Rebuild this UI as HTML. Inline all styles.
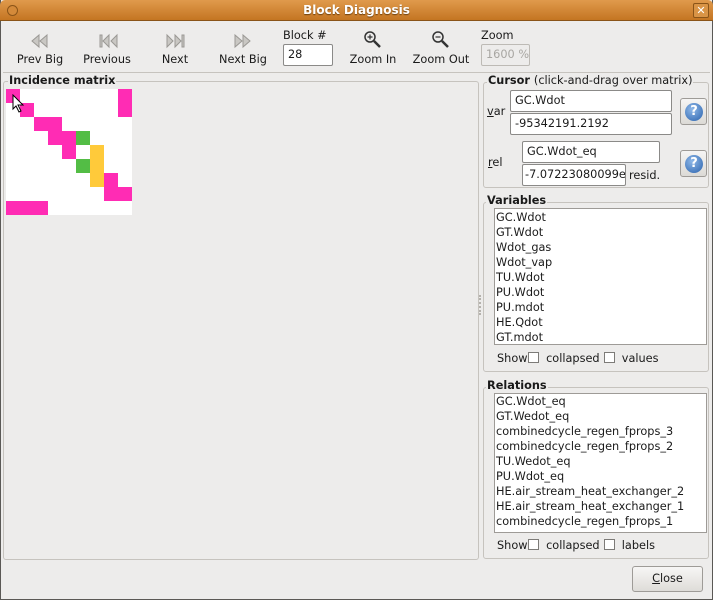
<!DOCTYPE html>
<html><head><style>
*{margin:0;padding:0;box-sizing:border-box}
body{width:713px;height:600px;background:#edeceb;font-family:"DejaVu Sans","Liberation Sans",sans-serif;font-size:11.3px;color:#1a1a1a;position:relative;overflow:hidden}
.a{position:absolute}
.title{left:0;top:0;width:713px;height:21px;background:linear-gradient(#e09a4c,#c47522);border-bottom:1px solid #8a5418;border-radius:5px 5px 0 0}
.title span{position:absolute;left:0;right:0;top:3px;text-align:center;color:#fff;font-weight:bold;font-size:12px;text-shadow:0 1px 1px #6b4010}
.lbl{text-align:center;width:70px}
.entry{background:#fff;border:1px solid #8b8a88;border-radius:2px;padding:3px 0 0 4px;height:22px;white-space:nowrap;overflow:hidden}
.frame{border:1px solid #c6c3be;border-radius:3px}
.legend{background:#edeceb;padding:0 1px;font-weight:bold}
.list{background:#fff;border:1px solid #9e9b97}
.list div{height:15px;line-height:15px;padding-left:1px}
.help{width:27px;height:27px;border:1px solid #9e9b97;border-radius:3px;background:linear-gradient(#f6f5f4,#dcdad6)}
.help i{position:absolute;left:4px;top:4px;width:18px;height:18px;border-radius:50%;background:radial-gradient(circle at 40% 35%,#8fb8e8,#2a62ad);color:#fff;font-style:normal;font-weight:bold;text-align:center;line-height:18px;font-size:13px}
.cb{display:inline-block;width:11px;height:11px;border:1px solid #7d7b78;background:#fff;vertical-align:-1px;margin:0 3px 0 1px}
.c{position:absolute;width:14px;height:14px}
.p{background:#ff2cb4}.g{background:#53bd45}.y{background:#ffca3a}
</style></head><body>
<div class="a" style="left:0;top:0;width:713px;height:600px;border:1px solid #5a5855;border-top:none"></div>
<div class="a title"><span>Block Diagnosis</span><div class="a" style="left:7px;top:5px;width:11px;height:11px;border-radius:50%;border:1px solid #8a5418;background:#d48a3a"></div><div class="a" style="right:4px;top:3px;width:16px;height:15px;border:1px solid #8a5418;border-radius:2px;background:#d99446;color:#fff;font-weight:bold;font-size:11px;text-align:center;line-height:13px">✕</div></div>

<svg class="a" style="left:0;top:30px" width="560" height="22">
<g fill="#c9c7c3" stroke="#9a9894" stroke-width="1">
<path d="M39 5 L32 11 L39 17Z M47 5 L40 11 L47 17Z"/>
<path d="M100 5h2v12h-2z M109 5 L103 11 L109 17Z M117 5 L111 11 L117 17Z"/>
<path d="M167 5 L173 11 L167 17Z M175 5 L181 11 L175 17Z M182 5h2v12h-2z"/>
<path d="M235 5 L242 11 L235 17Z M243 5 L250 11 L243 17Z"/>
</g>
<g fill="none" stroke="#333" stroke-width="1.5">
<circle cx="370" cy="7" r="5"/><path d="M374 11l6 6" stroke-width="2.5"/><path d="M367.5 7h5M370 4.5v5" stroke-width="1.2"/>
<circle cx="438" cy="7" r="5"/><path d="M442 11l6 6" stroke-width="2.5"/><path d="M435.5 7h5" stroke-width="1.2"/>
</g>
</svg>
<div class="a lbl" style="left:5px;top:53px">Prev Big</div>
<div class="a lbl" style="left:72px;top:53px">Previous</div>
<div class="a lbl" style="left:140px;top:53px">Next</div>
<div class="a lbl" style="left:208px;top:53px">Next Big</div>
<div class="a" style="left:283px;top:29px">Block #</div>
<div class="a entry" style="left:283px;top:44px;width:50px">28</div>
<div class="a lbl" style="left:338px;top:53px">Zoom In</div>
<div class="a lbl" style="left:406px;top:53px">Zoom Out</div>
<div class="a" style="left:481px;top:29px">Zoom</div>
<div class="a entry" style="left:481px;top:44px;width:49px;background:#edeceb;color:#a8a6a2;border-color:#bdbab5">1600 %</div>
<div class="a" style="left:3px;top:72px;width:707px;height:1px;background:#c6c3be"></div>

<div class="a frame" style="left:3px;top:81px;width:476px;height:479px"></div>
<div class="a legend" style="left:8px;top:74px">Incidence matrix</div>
<div class="a" style="left:6px;top:89px;width:126px;height:126px;background:#fff">
<div class="c p" style="left:0;top:0"></div><div class="c p" style="left:112px;top:0;height:28px"></div>
<div class="c p" style="left:14px;top:14px"></div>
<div class="c p" style="left:28px;top:28px;width:28px"></div>
<div class="c p" style="left:42px;top:42px;width:28px"></div><div class="c g" style="left:70px;top:42px"></div>
<div class="c p" style="left:56px;top:56px"></div><div class="c y" style="left:84px;top:56px;height:42px"></div>
<div class="c g" style="left:70px;top:70px"></div>
<div class="c p" style="left:98px;top:84px;height:28px"></div><div class="c p" style="left:112px;top:98px"></div>
<div class="c p" style="left:0;top:112px;width:42px"></div>
</div>
<svg class="a" style="left:12px;top:94px" width="14" height="20"><path d="M1 1v14l3-3 3 6 2-1-3-6h5z" fill="#fff" stroke="#000"/></svg>
<div class="a" style="left:479px;top:295px;width:2px;height:20px;border-left:2px dotted #b5b2ad"></div>

<div class="a frame" style="left:483px;top:82px;width:226px;height:106px"></div>
<div class="a legend" style="left:487px;top:74px">Cursor <span style="font-weight:normal">(click-and-drag over matrix)</span></div>
<div class="a" style="left:487px;top:105px"><u>v</u>ar</div>
<div class="a entry" style="left:510px;top:90px;width:162px">GC.Wdot</div>
<div class="a entry" style="left:510px;top:113px;width:162px">-95342191.2192</div>
<div class="a help" style="left:680px;top:98px"><i>?</i></div>
<div class="a" style="left:488px;top:156px"><u>r</u>el</div>
<div class="a entry" style="left:522px;top:141px;width:138px">GC.Wdot_eq</div>
<div class="a entry" style="left:522px;top:164px;width:104px;padding-left:2px">-7.07223080099e</div>
<div class="a" style="left:629px;top:169px">resid.</div>
<div class="a help" style="left:680px;top:150px"><i>?</i></div>

<div class="a frame" style="left:483px;top:202px;width:226px;height:170px"></div>
<div class="a legend" style="left:486px;top:194px">Variables</div>
<div class="a list" style="left:494px;top:208px;width:213px;height:137px;padding-top:1px">
<div>GC.Wdot</div><div>GT.Wdot</div><div>Wdot_gas</div><div>Wdot_vap</div><div>TU.Wdot</div><div>PU.Wdot</div><div>PU.mdot</div><div>HE.Qdot</div><div>GT.mdot</div></div>
<div class="a" style="left:497px;top:352px">Show<span class="cb"></span> collapsed <span class="cb"></span> values</div>

<div class="a frame" style="left:483px;top:387px;width:226px;height:172px"></div>
<div class="a legend" style="left:486px;top:379px">Relations</div>
<div class="a list" style="left:494px;top:393px;width:213px;height:140px;padding-top:0">
<div>GC.Wdot_eq</div><div>GT.Wedot_eq</div><div>combinedcycle_regen_fprops_3</div><div>combinedcycle_regen_fprops_2</div><div>TU.Wedot_eq</div><div>PU.Wdot_eq</div><div>HE.air_stream_heat_exchanger_2</div><div>HE.air_stream_heat_exchanger_1</div><div>combinedcycle_regen_fprops_1</div></div>
<div class="a" style="left:497px;top:539px">Show<span class="cb"></span> collapsed <span class="cb"></span> labels</div>

<div class="a" style="left:632px;top:566px;width:71px;height:26px;border:1px solid #9e9b97;border-radius:3px;background:linear-gradient(#f7f6f5,#dedcd8);text-align:center;line-height:24px"><u>C</u>lose</div>
</body></html>
